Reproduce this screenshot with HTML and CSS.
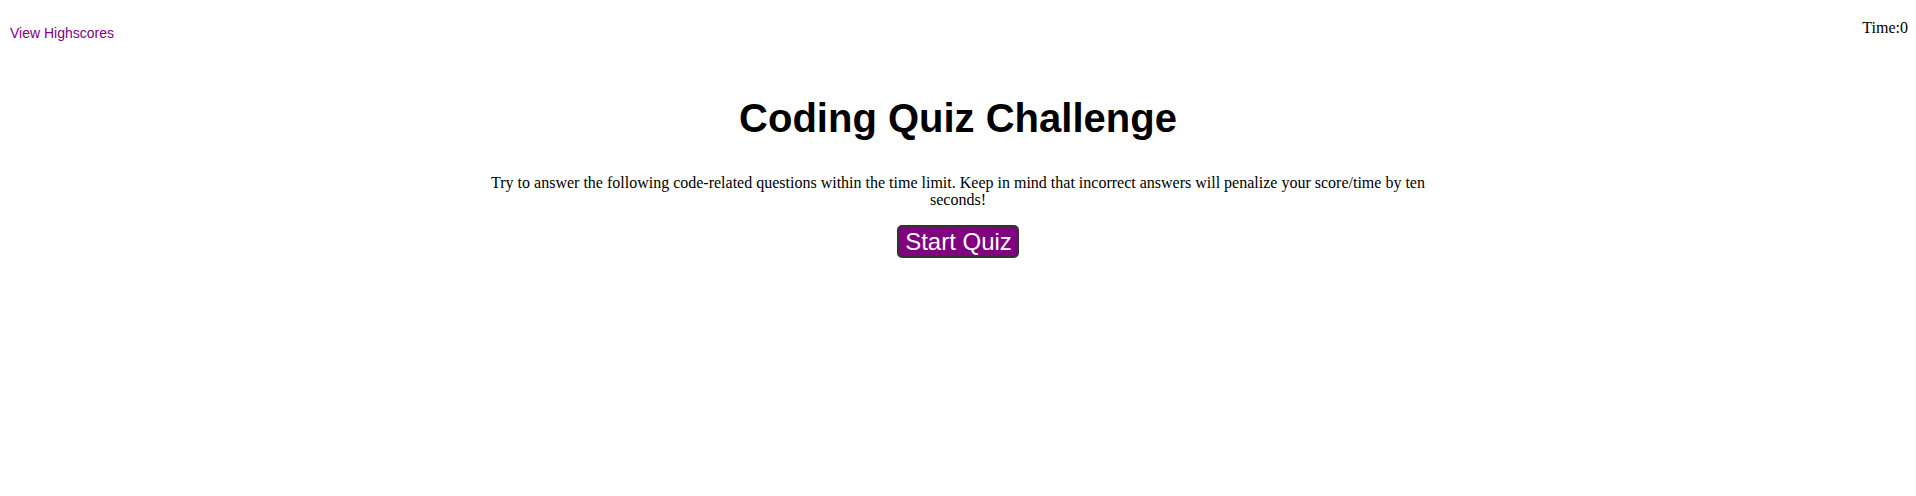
FILE: index.html
```html
<!DOCTYPE html>
<html>
<head>
<meta charset="utf-8">
<title>Coding Quiz Challenge</title>
<link rel="stylesheet" href="styles.css">
</head>
<body>
<header class="top">
  <a class="highscores" href="#">View Highscores</a>
  <div class="timer">Time:<span>0</span></div>
</header>
<main class="intro">
  <h1 class="title">Coding Quiz Challenge</h1>
  <p class="desc">Try to answer the following code-related questions within the time limit. Keep in mind that incorrect answers will penalize your score/time by ten seconds!</p>
  <button class="start">Start Quiz</button>
</main>
</body>
</html>
```
FILE: styles.css
```css
body {
  margin: 8px;
  font-family: "Liberation Serif", "Times New Roman", serif;
  font-size: 16px;
  color: #000;
  background: #fff;
}
.top {
  display: flex;
  justify-content: space-between;
  align-items: flex-start;
  padding-top: 11px;
}
.highscores {
  font-family: "Liberation Sans", Arial, sans-serif;
  font-size: 14px;
  color: #800080;
  text-decoration: none;
  margin-top: 6px;
  padding-left: 2px;
}
.intro {
  display: flex;
  flex-direction: column;
  align-items: center;
  text-align: center;
}
.title {
  font-family: "Liberation Sans", Arial, sans-serif;
  font-size: 40px;
  font-weight: bold;
  margin: 55px 0 0;
}
.desc {
  width: 50%;
  margin: 33px 0 17px;
  line-height: 17px;
}
.start {
  font-family: "Liberation Sans", Arial, sans-serif;
  font-size: 24px;
  color: #fff;
  background: #800080;
  border: 2px solid #333;
  border-radius: 5px;
  padding: 0 5px 0 6px;
  line-height: 29px;
}
```
